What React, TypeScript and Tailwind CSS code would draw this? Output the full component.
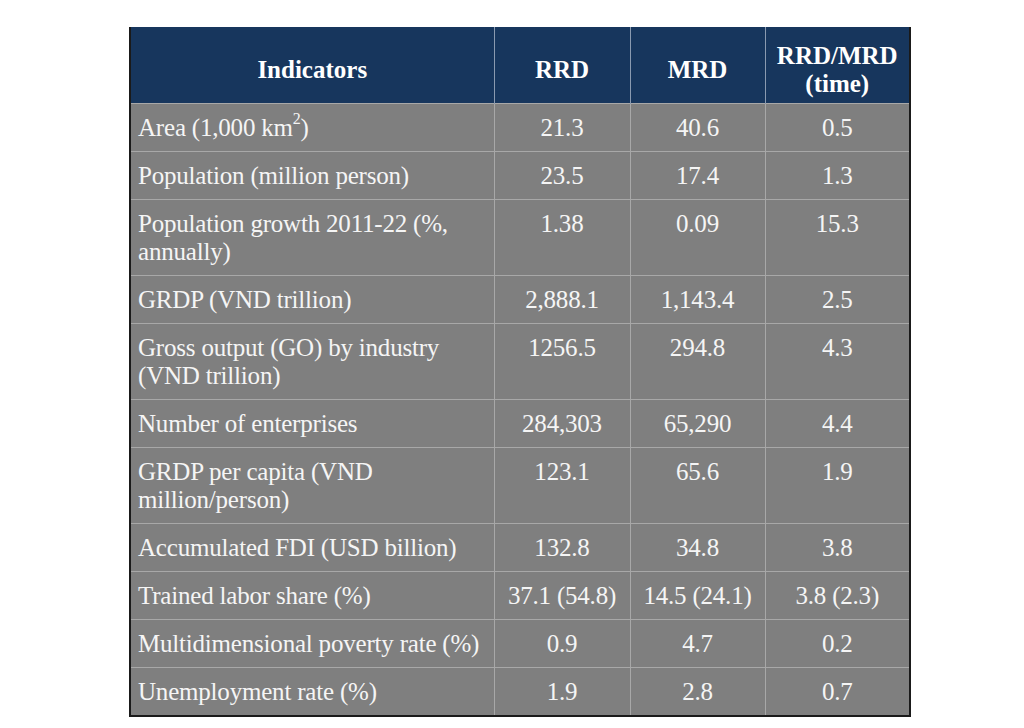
const rows: { label: React.ReactNode; rrd: string; mrd: string; ratio: string }[] = [
  { label: <>Area (1,000 km<sup className="text-[16px] relative -top-[3px] align-super leading-none">2</sup>)</>, rrd: "21.3", mrd: "40.6", ratio: "0.5" },
  { label: "Population (million person)", rrd: "23.5", mrd: "17.4", ratio: "1.3" },
  { label: "Population growth 2011-22 (%, annually)", rrd: "1.38", mrd: "0.09", ratio: "15.3" },
  { label: "GRDP (VND trillion)", rrd: "2,888.1", mrd: "1,143.4", ratio: "2.5" },
  { label: "Gross output (GO) by industry (VND trillion)", rrd: "1256.5", mrd: "294.8", ratio: "4.3" },
  { label: "Number of enterprises", rrd: "284,303", mrd: "65,290", ratio: "4.4" },
  { label: "GRDP per capita (VND million/person)", rrd: "123.1", mrd: "65.6", ratio: "1.9" },
  { label: "Accumulated FDI (USD billion)", rrd: "132.8", mrd: "34.8", ratio: "3.8" },
  { label: "Trained labor share (%)", rrd: "37.1 (54.8)", mrd: "14.5 (24.1)", ratio: "3.8 (2.3)" },
  { label: "Multidimensional poverty rate (%)", rrd: "0.9", mrd: "4.7", ratio: "0.2" },
  { label: "Unemployment rate (%)", rrd: "1.9", mrd: "2.8", ratio: "0.7" },
];

export default function App() {
  return (
    <div className="w-[1024px] h-[728px] bg-white pt-[27px] pl-[129px] [font-family:Liberation_Serif,Times_New_Roman,serif]">
      <table className="[font-family:Liberation_Serif,Times_New_Roman,serif] border-collapse table-fixed w-[780px] border-l-2 border-r-2 border-b-2 border-[#1a1a1a] text-[25px] leading-[28px]">
        <colgroup>
          <col className="w-[364px]" />
          <col className="w-[136px]" />
          <col className="w-[135px]" />
          <col className="w-[145px]" />
        </colgroup>
        <thead>
          <tr className="bg-[#17365d] text-white font-bold h-[76px]">
            <th className="border-r border-[#8a9ab0] text-center align-middle pt-[10px]">Indicators</th>
            <th className="border-r border-[#8a9ab0] text-center align-middle pt-[10px]">RRD</th>
            <th className="border-r border-[#8a9ab0] text-center align-middle pt-[10px]">MRD</th>
            <th className="text-center align-middle pt-[10px]">
              RRD/MRD
              <br />
              (time)
            </th>
          </tr>
        </thead>
        <tbody className="bg-[#7f7f7f] text-[#f5f5f5] tracking-[-0.2px]">
          {rows.map((r, i) => (
            <tr key={i} className="border-t border-[#a8a8a8]">
              <td className="border-r border-[#a8a8a8] align-top pl-[7px] pr-[4px] pt-[10px] pb-[9px]">{r.label}</td>
              <td className="border-r border-[#a8a8a8] align-top text-center pt-[10px] pb-[9px]">{r.rrd}</td>
              <td className="border-r border-[#a8a8a8] align-top text-center pt-[10px] pb-[9px]">{r.mrd}</td>
              <td className="align-top text-center pt-[10px] pb-[9px]">{r.ratio}</td>
            </tr>
          ))}
        </tbody>
      </table>
    </div>
  );
}
